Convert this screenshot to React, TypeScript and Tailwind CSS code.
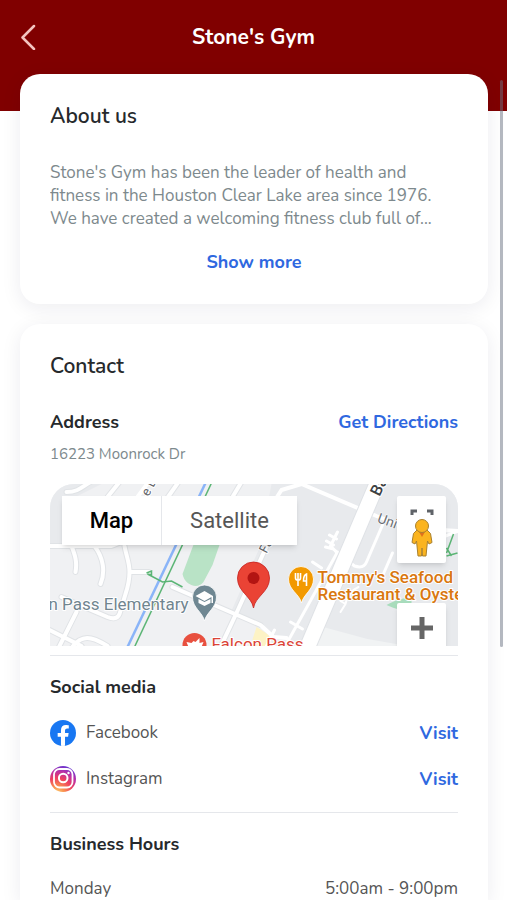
import React, { useState } from 'react';

const SOCIALS = [
  { name: 'Facebook', icon: <FacebookLogo />, href: '#facebook' },
  { name: 'Instagram', icon: <InstagramLogo />, href: '#instagram' },
];

const HOURS = [{ day: 'Monday', time: '5:00am - 9:00pm' }];

function FacebookLogo() {
  return (
    <svg viewBox="0 0 24 24" className="w-[26px] h-[26px] shrink-0" aria-hidden="true">
      <circle cx="12" cy="12" r="12" fill="#1877f2" />
      <path
        d="M16.67 15.47 17.2 12h-3.33V9.75c0-.95.47-1.87 1.96-1.87h1.51V4.92s-1.37-.23-2.69-.23c-2.74 0-4.53 1.66-4.53 4.67V12H7.08v3.47h3.04v8.38a12.1 12.1 0 0 0 3.75 0v-8.38h2.8Z"
        fill="#fff"
      />
    </svg>
  );
}

function InstagramLogo() {
  return (
    <svg viewBox="0 0 26 26" className="w-[26px] h-[26px] shrink-0" aria-hidden="true">
      <defs>
        <radialGradient id="ig-warm" cx="0.27" cy="1.07" r="1.1">
          <stop offset="0" stopColor="#fed576" />
          <stop offset="0.26" stopColor="#f9914f" />
          <stop offset="0.55" stopColor="#ee4060" />
          <stop offset="0.8" stopColor="#b92fa8" />
          <stop offset="1" stopColor="#6a36cf" />
        </radialGradient>
      </defs>
      <circle cx="13" cy="13" r="13" fill="url(#ig-warm)" />
      <rect x="4" y="3" width="18.5" height="18.5" rx="5.5" fill="none" stroke="#fff" strokeWidth="1.8" />
      <circle cx="13.2" cy="12" r="4.3" fill="none" stroke="#fff" strokeWidth="2" />
      <circle cx="18.5" cy="7" r="1.2" fill="#fff" />
    </svg>
  );
}

function Pegman() {
  return (
    <svg viewBox="0 0 24 50" className="w-6 h-[50px]" aria-hidden="true">
      <path d="M2 6V2h5M17 2h5v4" fill="none" stroke="#5f6368" strokeWidth="3" />
      <path
        d="M7 21 3.5 24.5 2 33.5l3 1.5 1.5-3L8 47h3.5l.5-8 .5 8H16l1.5-15 1.5 3 3-1.5-1.5-9L17 21Z"
        fill="#fbb41f"
        stroke="#a9812f"
        strokeWidth="1"
        strokeLinejoin="round"
      />
      <path d="M8.5 22h7L12 28Z" fill="#e0701c" />
      <circle cx="12" cy="17" r="6.5" fill="#fbb41f" stroke="#a9812f" strokeWidth="1" />
    </svg>
  );
}

function MapDrawing() {
  return (
    <svg viewBox="0 0 409 162" preserveAspectRatio="xMidYMid slice" className="block w-full h-full" aria-label="Map of the area">
      <rect width="409" height="162" fill="#f0f1f3" />
      <path d="M222 0h187v162H225l-14-21-30-12 29-65Z" fill="#e8eaed" />
      <path d="M0 0h52L26 13v49H0Z" fill="#e8eaed" />
      <path d="M262 162 270 142l48 13 40 7Z" fill="#f1f3f4" />
      <path d="M207 143l16 10-4 9h-18Z" fill="#fdf3c5" />
      <path d="M145 58h26l-8 23-9 17c-6 8-19 3-21-8Z" fill="#b9e3c6" />
      <path d="M337 121c10-5 18-8 25-6v13c-9-2-17-3-25-7Z" fill="#a8dcbc" />

      {/* street casings */}
      <g fill="none" stroke="#e0e3e6" strokeWidth="6" strokeLinecap="round" strokeLinejoin="round">
        <path d="M17 8c12 0 15-5 24-10M70-2 58 13M129-2l-14 20M192-2l-9 15" />
        <path d="M0 62h62l15-6M22 62c3 8 6 15 4 26M45 62c9 12 11 26 6 38M75 62c2 11 5 16 5 26 0 10-2 16-4 22l-6 20c-2 5-7 5-12 3l-28-12-18-8M80 88h19" />
        <path d="M0 146l32 16M9 164l18-36M22 164c10-14 20-12 36-2M123 103l88 38M228 38 187 129l-16 34" />
      </g>
      <g fill="none" stroke="#fff" strokeLinecap="round" strokeLinejoin="round">
        <g strokeWidth="4">
          <path d="M17 8c12 0 15-5 24-10M70-2 58 13M99-2 88 13M129-2l-14 20M192-2l-9 15" />
          <path d="M0 62h62l15-6M22 62c3 8 6 15 4 26M45 62c9 12 11 26 6 38M75 62c2 11 5 16 5 26 0 10-2 16-4 22l-6 20c-2 5-7 5-12 3l-28-12-18-8M80 88h19" />
          <path d="M0 146l32 16M9 164l18-36M22 164c10-14 20-12 36-2" />
          <path d="M123 103l88 38 13 12 13 1M228 38 187 129l-16 34M223 20l9-14 20-6 75 32 32 12 50 3" />
        </g>
        <g strokeWidth="3">
          <path d="M288 68 238 158M333 41l-16 37c-2 5-6 6-12 4l-19-15M343 69l-10 23M241 138l12 7" />
          <path d="M288 48l-7 14 6 6M277 57l7 4M280 51l7 4M276 63l8 2M396 52l13-5M272 84l-9-6M225 146l-8 16" />
        </g>
        <path d="M330-6 256 168" stroke="#dfe2e6" strokeWidth="17" />
        <path d="M330-6 256 168" strokeWidth="15" />
        <path d="M309 103c-7 3-12 10-13 17l-5 8M296 120l-5-3" strokeWidth="2" />
      </g>

      {/* bayou and trail */}
      <path d="M156-1 78 163" stroke="#8ab4f8" strokeWidth="2.5" />
      <path d="M162-1 85 163" stroke="#5bb575" strokeWidth="1.5" />
      <path d="M97 89l5-2v4l-4-1 15 8 9-1 11 6M404 50l-7 19M397 72l11-3M397 64l5 8" fill="none" stroke="#5bb575" strokeWidth="1.5" />

      <g fontFamily="Roboto, 'Liberation Sans', sans-serif" stroke="#fff" strokeWidth="2" paintOrder="stroke" strokeLinejoin="round">
        <text x="99" y="13" fontSize="13" fill="#5f6368" transform="rotate(-62 99 13)">e L</text>
        <text x="217" y="70" fontSize="13" fill="#5f6368" transform="rotate(-62 217 70)">Falcon</text>
        <text x="330" y="13" fontSize="16" fontWeight="500" fill="#3c4043" transform="rotate(-64 330 13)">Bay</text>
        <text x="327" y="38" fontSize="14" fill="#6b7075" strokeWidth="1" transform="rotate(20 327 38)">Univ</text>
        <text x="-1" y="126" fontSize="17" fill="#71858f">n Pass Elementary</text>
        <text x="162" y="166" fontSize="17" fill="#db4437">Falcon Pass</text>
        <g fontSize="17" fontWeight="500" fill="#d9770f">
          <text x="268" y="99">Tommy's Seafood</text>
          <text x="268" y="116">Restaurant &amp; Oyster</text>
        </g>
      </g>

      {/* school */}
      <path d="M155 137c-2-9-12-13-12-24a12 12 0 0 1 24 0c0 11-10 15-12 24Z" fill="#6f8792" stroke="#fff" strokeWidth="0.8" />
      <path d="M155 107l-9 5 9 5 7-4v6h1.5v-7ZM149 115v4l6 3 6-3v-4l-6 3Z" fill="#fff" />

      {/* restaurant */}
      <path d="M252 119c-2-9-13-13-13-24a12.5 12.5 0 0 1 25 0c0 11-10 15-12 24Z" fill="#f29900" stroke="#fff" strokeWidth="0.8" />
      <path d="M246 89v5c0 3 5 3 5 0v-5M248.5 89v13M257 102V90c-3 1-3 5-3 7h3" fill="none" stroke="#fff" strokeWidth="1.6" />

      {/* park entrance */}
      <circle cx="145" cy="161" r="12" fill="#e8503f" />
      <path d="M137 158l5 1 2-2 2 1 4-4v5l4-1-2 5h-13Z" fill="#fff" />

      {/* gym location */}
      <path d="M204 124c-2-12-16-16-16-30a16 16 0 0 1 32 0c0 14-14 18-16 30Z" fill="#ea4335" stroke="#c5221f" strokeWidth="0.8" />
      <circle cx="204" cy="94" r="6" fill="#b31412" />
    </svg>
  );
}

function LocationMap() {
  const [mapType, setMapType] = useState<'map' | 'satellite'>('map');

  return (
    <div className="relative h-[162px] mt-5 overflow-hidden rounded-t-3xl font-['Roboto','Liberation_Sans',sans-serif]">
      <MapDrawing />
      <div className="absolute left-3 top-3 flex h-[49px] bg-white shadow-md text-[22px]">
        <button
          onClick={() => setMapType('map')}
          className={`w-[100px] border-r border-gray-200 ${mapType === 'map' ? 'font-medium text-black' : 'text-[#565656]'}`}
        >
          Map
        </button>
        <button
          onClick={() => setMapType('satellite')}
          className={`w-[135px] ${mapType === 'satellite' ? 'font-medium text-black' : 'text-[#565656]'}`}
        >
          Satellite
        </button>
      </div>
      <div className="absolute right-3 top-3 flex flex-col gap-10">
        <button aria-label="Street View" className="w-[49px] h-[67px] flex items-end justify-center pb-1 bg-white rounded-xs shadow-md">
          <Pegman />
        </button>
        <button aria-label="Zoom in" className="w-[49px] h-[49px] flex items-center justify-center bg-white rounded-xs shadow-md">
          <svg viewBox="0 0 22 22" className="w-[22px] h-[22px]" aria-hidden="true">
            <path d="M11 0v22M0 11h22" stroke="#666" strokeWidth="5" />
          </svg>
        </button>
      </div>
    </div>
  );
}

function App() {
  const [expanded, setExpanded] = useState(false);

  return (
    <div className="relative h-screen overflow-hidden flex flex-col bg-white text-[#26292c] font-['Nunito','Open_Sans','Noto_Sans',sans-serif]">
      {/* Header */}
      <header className="shrink-0 bg-[#800000] text-white pt-[25px] pb-[62px] px-5 grid grid-cols-[24px_1fr_24px] items-center">
        <button aria-label="Back" className="h-6 flex items-center">
          <svg viewBox="0 0 16 26" className="w-4 h-[26px] shrink-0" aria-hidden="true">
            <path d="M14 2 2.5 13.5 14 25" fill="none" stroke="#f3c4c0" strokeWidth="2.5" strokeLinecap="round" strokeLinejoin="round" />
          </svg>
        </button>
        <h1 className="text-center text-[21px] leading-6 font-bold">Stone's Gym</h1>
      </header>

      <main className="relative flex-1 flex flex-col gap-5 pl-5 pr-[19px] -mt-[37px]">
        {/* About */}
        <section className="shrink-0 bg-white rounded-[20px] px-[30px] pt-[30px] pb-[30px] shadow-[0_4px_20px_rgba(30,30,60,0.08)]">
          <h2 className="text-[21px] leading-6 font-semibold">About us</h2>
          <p className={`mt-[33px] text-[17px] leading-[23px] text-[#7d898d] ${expanded ? '' : 'line-clamp-3'}`}>
            Stone's Gym has been the leader of health and<br />
            fitness in the Houston Clear Lake area since 1976.<br />
            We have created a welcoming fitness club full of...
          </p>
          <button onClick={() => setExpanded(!expanded)} className="block mx-auto mt-5 text-lg leading-6 font-bold text-[#2f68e0]">
            Show more
          </button>
        </section>

        {/* Contact */}
        <section className="flex-1 bg-white rounded-t-[20px] px-[30px] pt-[30px] shadow-[0_4px_20px_rgba(30,30,60,0.08)]">
          <h2 className="text-[21px] leading-6 font-semibold">Contact</h2>
          <div className="mt-8 flex items-center justify-between text-lg leading-6 font-bold">
            <h3>Address</h3>
            <a href="#directions" className="text-[#2f68e0]">Get Directions</a>
          </div>
          <p className="mt-2.5 text-[15px] leading-5 text-[#7d898d]">16223 Moonrock Dr</p>
          <LocationMap />

          <div className="mt-[9px] pt-[19px] border-t border-gray-200">
            <h3 className="text-lg leading-6 font-bold">Social media</h3>
            <ul className="mt-[21px] flex flex-col gap-5">
              {SOCIALS.map((s) => (
                <li key={s.name} className="flex items-center gap-2.5 leading-6">
                  {s.icon}
                  <span className="text-[17px] text-[#555]">{s.name}</span>
                  <a href={s.href} aria-label={`Visit ${s.name}`} className="ml-auto text-lg leading-6 font-bold text-[#2f68e0]">Visit</a>
                </li>
              ))}
            </ul>
          </div>

          <div className="mt-5 pt-[19px] border-t border-gray-200">
            <h3 className="text-lg leading-6 font-bold">Business Hours</h3>
            <table className="w-full mt-[21px] text-[17px] leading-6 text-[#555]">
              <tbody>
                {HOURS.map((h) => (
                  <tr key={h.day}>
                    <th scope="row" className="text-left font-normal">{h.day}</th>
                    <td className="text-right">{h.time}</td>
                  </tr>
                ))}
              </tbody>
            </table>
          </div>
        </section>
      </main>

      {/* Scroll thumb */}
      <div className="absolute right-1 top-20 w-[3px] h-[63%] rounded-full bg-gray-500/50" />
    </div>
  );
}

export default App;
